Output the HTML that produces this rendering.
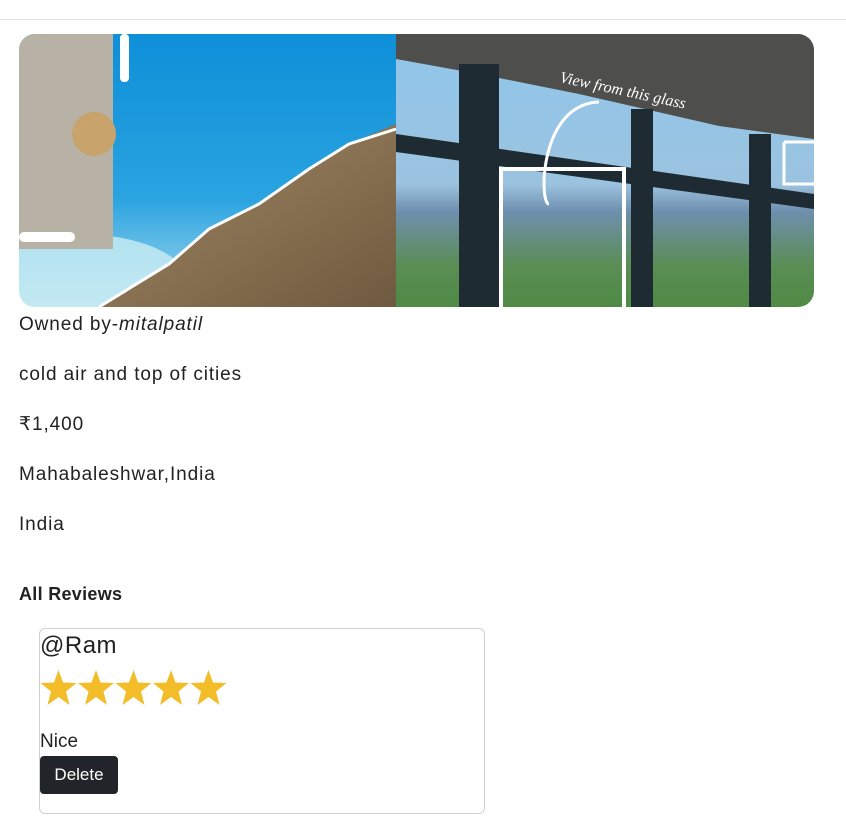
<!DOCTYPE html>
<html><head><style>
body{margin:0;background:#fff;font-family:"Liberation Sans",sans-serif;color:#222;width:846px;height:821px;overflow:hidden;position:relative}
.hr{position:absolute;left:0;top:19px;width:846px;height:1px;background:#e2e2e2}
.img{position:absolute;left:19px;top:34px;width:795px;height:273px;border-radius:16px;overflow:hidden}
.t{position:absolute;left:19px;font-size:19px;line-height:22px;color:#222;letter-spacing:0.9px}
.card{position:absolute;left:39px;top:628px;width:444px;height:184px;border:1px solid #d0d0d0;border-radius:6px}
</style></head><body>
<div class="hr"></div>
<div class="img">
<svg width="795" height="273" viewBox="0 0 795 273">
<defs>
<linearGradient id="sky" x1="0" y1="0" x2="0" y2="1"><stop offset="0" stop-color="#0e8fd8"/><stop offset="0.6" stop-color="#2aa3e0"/><stop offset="1" stop-color="#a9dbee"/></linearGradient>
<linearGradient id="rock" x1="0" y1="0" x2="1" y2="1"><stop offset="0" stop-color="#a48a66"/><stop offset="1" stop-color="#6e5a3f"/></linearGradient>
<linearGradient id="win" x1="0" y1="0" x2="0" y2="1"><stop offset="0" stop-color="#8fc6ea"/><stop offset="0.55" stop-color="#9bc3e0"/><stop offset="0.65" stop-color="#6f8fae"/><stop offset="0.85" stop-color="#5a8e54"/><stop offset="1" stop-color="#4f8a45"/></linearGradient>
</defs>
<rect x="0" y="0" width="377" height="273" fill="url(#sky)"/>
<ellipse cx="60" cy="250" rx="110" ry="50" fill="#c9ecf3" opacity="0.8"/>
<path d="M80 273 L150 230 L190 195 L240 170 L290 135 L330 110 L377 90 L377 273Z" fill="url(#rock)"/>
<path d="M80 273 L150 230 L190 195 L240 170 L290 135 L330 110 L377 95" stroke="#fff" stroke-width="3" fill="none"/>
<rect x="0" y="0" width="94" height="215" fill="#b8b2a6"/>
<circle cx="75" cy="100" r="22" fill="#c9a36c"/>
<rect x="0" y="198" width="56" height="10" rx="5" fill="#fff"/>
<rect x="101" y="0" width="9" height="48" rx="4" fill="#fff"/>
<rect x="377" y="0" width="418" height="273" fill="url(#win)"/>
<path d="M377 0 H795 V105 L700 92 L560 60 L460 40 L377 25Z" fill="#4e4e4c"/>
<rect x="440" y="30" width="40" height="243" fill="#1e2b33"/>
<rect x="612" y="75" width="22" height="198" fill="#1e2b33"/>
<rect x="730" y="100" width="22" height="173" fill="#1e2b33"/>
<path d="M377 100 L795 160 L795 175 L377 118Z" fill="#1e2b33"/>
<path d="M480 135 H605 V273 M482 135 V273" stroke="#fff" stroke-width="4" fill="none"/>
<path d="M580 68 C520 70 520 170 530 170 M765 108 H795 M765 108 V150 H795" stroke="#fff" stroke-width="3" fill="none"/>
<text x="540" y="48" fill="#fff" font-size="16" font-style="italic" font-family="Liberation Serif,serif" transform="rotate(12 540 48)">View from this glass</text>
</svg>
</div>
<div class="t" style="top:314px">Owned by-<i>mitalpatil</i></div>
<div class="t" style="top:364px">cold air and top of cities</div>
<div class="t" style="top:414px">₹1,400</div>
<div class="t" style="top:464px">Mahabaleshwar,India</div>
<div class="t" style="top:514px">India</div>
<div class="t" style="top:583px;font-weight:bold;font-size:18px;letter-spacing:0.3px">All Reviews</div>
<div class="card">
<div style="position:absolute;left:0;top:3px;font-size:24px;color:#222;letter-spacing:0.5px">@Ram</div>
<svg style="position:absolute;left:0;top:40px" width="190" height="40" viewBox="0 0 190 40">
<g fill="#f3bc29">
<path id="s" d="M18.5 1 L23 13.5 L36.5 14 L26 22.5 L29.5 36 L18.5 28 L7.5 36 L11 22.5 L0.5 14 L14 13.5Z"/>
<use href="#s" x="37.5"/><use href="#s" x="75"/><use href="#s" x="112.5"/><use href="#s" x="150"/>
</g></svg>
<div style="position:absolute;left:0;top:102px;font-size:19px">Nice</div>
<div style="position:absolute;left:0;top:127px;width:78px;height:38px;background:#212529;color:#fff;border-radius:4px;font-size:17px;line-height:38px;text-align:center">Delete</div>
</div>
</body></html>
